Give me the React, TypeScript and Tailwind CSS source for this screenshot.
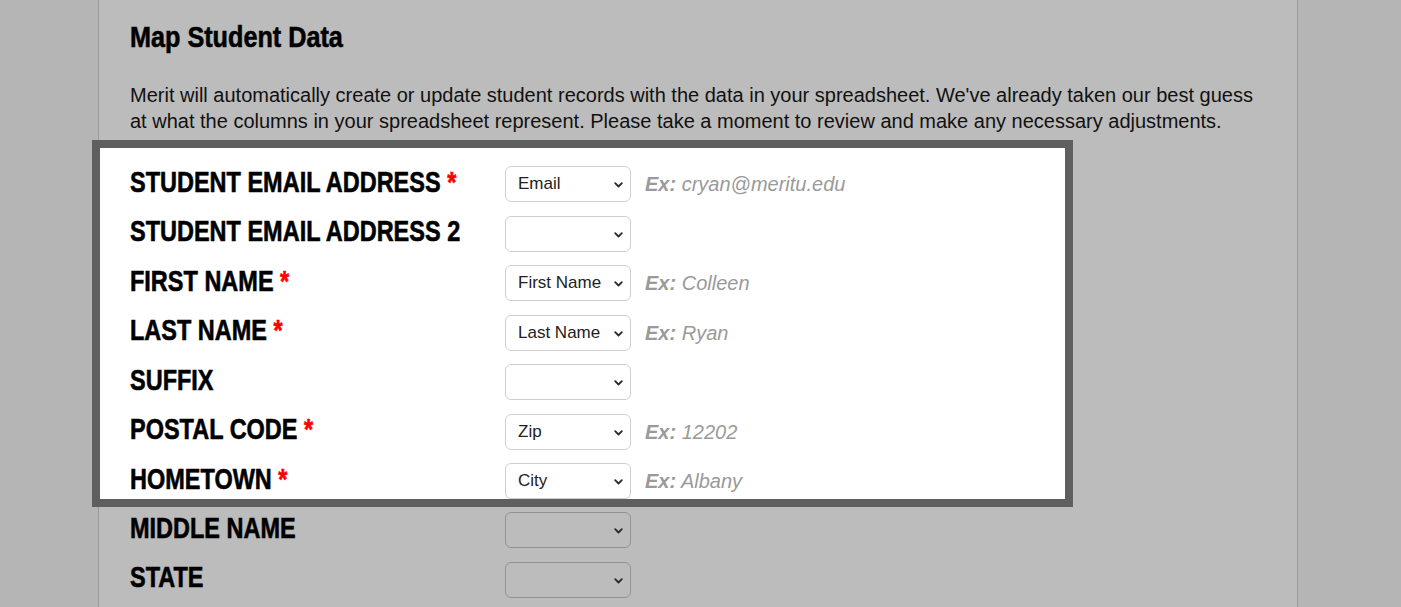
import { FC } from 'react';

interface FieldRow {
  label: string;
  required?: boolean;
  value: string;
  example?: string;
}

const highlighted: FieldRow[] = [
  { label: 'STUDENT EMAIL ADDRESS', required: true, value: 'Email', example: 'cryan@meritu.edu' },
  { label: 'STUDENT EMAIL ADDRESS 2', value: '' },
  { label: 'FIRST NAME', required: true, value: 'First Name', example: 'Colleen' },
  { label: 'LAST NAME', required: true, value: 'Last Name', example: 'Ryan' },
  { label: 'SUFFIX', value: '' },
  { label: 'POSTAL CODE', required: true, value: 'Zip', example: '12202' },
  { label: 'HOMETOWN', required: true, value: 'City', example: 'Albany' },
];

const rest: FieldRow[] = [
  { label: 'MIDDLE NAME', value: '' },
  { label: 'STATE', value: '' },
];

// no condensed face installed, so squeeze Liberation Sans Bold horizontally
const condensed =
  "font-['Liberation_Sans',Arial,sans-serif] font-bold whitespace-nowrap origin-left [-webkit-text-stroke:0.6px_currentColor]";

const MapSelect: FC<{ value: string; dim?: boolean }> = ({ value, dim }) => (
  <div className="relative w-[126px] h-[36px] shrink-0">
    <select
      value={value}
      onChange={() => {}}
      className={`appearance-none w-full h-full rounded-[6px] border pl-[12px] pr-[24px] text-[17px] text-[#222] font-['Liberation_Sans',Arial,sans-serif] focus:outline-none ${
        dim ? 'bg-transparent border-[#929292]' : 'bg-white border-[#cfcfcf]'
      }`}
    >
      <option value="">{''}</option>
      <option value="Email">Email</option>
      <option value="First Name">First Name</option>
      <option value="Last Name">Last Name</option>
      <option value="Zip">Zip</option>
      <option value="City">City</option>
    </select>
    <svg
      className="absolute right-[8px] top-[16px] w-[9px] h-[6px] pointer-events-none"
      viewBox="0 0 9 6"
      fill="none"
      stroke="#2a2a2a"
      strokeWidth="1.8"
      strokeLinecap="round"
      strokeLinejoin="round"
    >
      <path d="M1.2 1.2 4.5 4.5 7.8 1.2" />
    </svg>
  </div>
);

const Row: FC<{ row: FieldRow; dim?: boolean }> = ({ row, dim }) => (
  <div className="flex items-center h-[36px]">
    <div className="w-[375px] shrink-0">
      <div className={`inline-block text-[29px] leading-none text-black scale-x-[0.81] -mt-[3px] ${condensed}`}>
        {row.label}
        {row.required && <span className="text-[#ff0000]"> *</span>}
      </div>
    </div>
    <MapSelect value={row.value} dim={dim} />
    {row.example && (
      <span className="ml-[14px] text-[20px] italic text-[#9a9a9a] font-['Liberation_Sans',Arial,sans-serif]">
        <span className="font-bold">Ex:</span> {row.example}
      </span>
    )}
  </div>
);

export default function App() {
  return (
    <div className="min-h-screen w-full bg-[#b5b5b5] overflow-hidden">
      <div className="ml-[98px] w-[1200px] min-h-screen bg-[#bcbcbc] border-x border-[#999999] px-[31px] pt-[20px]">
        {/* Header */}
        <h2 className={`text-[30px] leading-[34px] text-black scale-x-[0.84] ${condensed}`}>Map Student Data</h2>
        <p className="mt-[28px] text-[20px] leading-[26px] text-[#111] font-['Liberation_Sans',Arial,sans-serif] whitespace-nowrap">
          Merit will automatically create or update student records with the data in your spreadsheet. We've already taken our best guess
          <br />
          at what the columns in your spreadsheet represent. Please take a moment to review and make any necessary adjustments.
        </p>

        {/* Highlighted required fields */}
        <div className="mt-[6px] -ml-[38px] w-[981px] border-[8px] border-[#5f5f5f] bg-white pl-[30px] pt-[18px] flex flex-col gap-[13.5px]">
          {highlighted.map((row) => (
            <Row key={row.label} row={row} />
          ))}
        </div>

        {/* Other fields */}
        <div className="mt-[5px] flex flex-col gap-[13.5px]">
          {rest.map((row) => (
            <Row key={row.label} row={row} dim />
          ))}
        </div>
      </div>
    </div>
  );
}
